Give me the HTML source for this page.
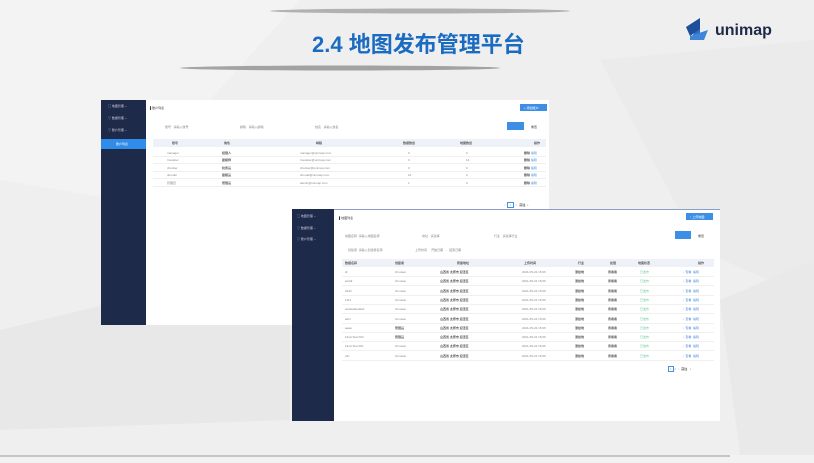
<!DOCTYPE html><html><head><meta charset="utf-8"><style>
*{margin:0;padding:0;box-sizing:border-box}
body{width:814px;height:463px;overflow:hidden;background:#efefef;font-family:"Liberation Sans","Noto Sans CJK SC",sans-serif;position:relative}
.a{position:absolute}
.t{font-size:3px;color:#888;white-space:nowrap}
.b{color:#555;font-weight:bold}
.bl{color:#4a8ee0}
</style></head><body>
<svg class="a" style="left:0;top:0" width="814" height="463">
<polygon points="0,0 300,0 120,200 0,180" fill="#f3f3f3"/>
<polygon points="600,60 814,40 814,300 700,250" fill="#ebebeb"/>
<polygon points="0,330 290,260 290,420 0,430" fill="#e8e8e8"/>
<polygon points="720,300 814,260 814,455 740,455" fill="#e9e9e9"/>
<rect x="0" y="455" width="814" height="8" fill="#f2f2f2"/>
<line x1="0" y1="456" x2="730" y2="456" stroke="#999" stroke-width="1"/>
<ellipse cx="420" cy="11" rx="150" ry="2.5" fill="#666" opacity=".45"/>
<ellipse cx="340" cy="68" rx="160" ry="2.5" fill="#555" opacity=".5"/>
<polygon points="700,22 693,35 700,40" fill="#2b6fc6"/>
<polygon points="686,27 700,18 700,29 690,36" fill="#1d4f9a"/>
<polygon points="690,36 708,30 704,40 690,40" fill="#3f86da"/>
</svg>
<div class="a" style="left:312px;top:27px;font-size:22px;font-weight:bold;color:#1b6cc0">2.4 地图发布管理平台</div>
<div class="a" style="left:715px;top:22px;font-size:16px;font-weight:bold;color:#1e2a48">unimap</div>

<div class="a" style="left:101px;top:100px;width:448px;height:225px;background:#fff"></div>
<div class="a" style="left:101px;top:100px;width:45px;height:225px;background:#1e2a4a"></div>
<div class="a t" style="left:108px;top:104px;color:#ccd">▢ 地图管理 ⌄</div>
<div class="a t" style="left:108px;top:116px;color:#ccd">▽ 数据管理 ⌄</div>
<div class="a t" style="left:108px;top:128px;color:#ccd">▽ 账户管理 ⌄</div>
<div class="a" style="left:101px;top:139px;width:45px;height:10px;background:#2f8ce8"></div>
<div class="a t" style="left:116px;top:142px;color:#fff">账户列表</div>
<div class="a t" style="left:150px;top:106px;color:#333">▌账户列表</div>
<div class="a" style="left:520px;top:104px;width:27px;height:7px;background:#3d8fe6"></div>
<div class="a t" style="left:524px;top:106px;color:#fff">+ 添加账户</div>
<div class="a t" style="left:165px;top:125px">账号 &nbsp;&nbsp;请输入账号</div>
<div class="a t" style="left:240px;top:125px">邮箱 &nbsp;&nbsp;请输入邮箱</div>
<div class="a t" style="left:315px;top:125px">姓名 &nbsp;&nbsp;请输入姓名</div>
<div class="a" style="left:507px;top:122px;width:17px;height:8px;background:#3d8fe6"></div>
<div class="a t" style="left:531px;top:125px;color:#333">重置</div>
<div class="a" style="left:153px;top:139px;width:393px;height:8px;background:#eef1f7"></div>
<div class="a t b" style="left:172px;top:141px">账号</div><div class="a t b" style="left:224px;top:141px">角色</div><div class="a t b" style="left:316px;top:141px">邮箱</div><div class="a t b" style="left:403px;top:141px">数据数量</div><div class="a t b" style="left:460px;top:141px">地图数量</div><div class="a t b" style="left:534px;top:141px">操作</div>
<div id="r1"></div>
<div class="a t" style="left:504px;top:203px;color:#aaa">&lt; <span style="border:1px solid #4a8ee0;padding:0 2px">1</span> &gt; &nbsp;&nbsp;<b style="color:#555">前往</b> &nbsp;1</div>

<div class="a" style="left:292px;top:209px;width:428px;height:212px;background:#fff;border-top:1px solid #8aa0c8"></div>
<div class="a" style="left:292px;top:209px;width:42px;height:212px;background:#1e2a4a"></div>
<div class="a t" style="left:297px;top:214px;color:#ccd">▢ 地图管理 ⌄</div>
<div class="a t" style="left:297px;top:226px;color:#ccd">▽ 数据管理 ⌄</div>
<div class="a t" style="left:297px;top:237px;color:#ccd">▽ 账户管理 ⌄</div>
<div class="a t" style="left:339px;top:216px;color:#333">▌地图列表</div>
<div class="a" style="left:686px;top:213px;width:27px;height:7px;background:#3d8fe6"></div>
<div class="a t" style="left:690px;top:215px;color:#fff">↑ 上传地图</div>
<div class="a t" style="left:345px;top:234px">地图名称 &nbsp;请输入地图名称</div>
<div class="a t" style="left:422px;top:234px">地址 &nbsp;&nbsp;请选择</div>
<div class="a t" style="left:494px;top:234px">行业 &nbsp;&nbsp;请选择行业</div>
<div class="a" style="left:675px;top:231px;width:16px;height:8px;background:#3d8fe6"></div>
<div class="a t" style="left:698px;top:234px;color:#333">重置</div>
<div class="a t" style="left:348px;top:248px">创建者 &nbsp;请输入创建者名称</div>
<div class="a t" style="left:415px;top:248px">上传时间 &nbsp;&nbsp;&nbsp;&nbsp;开始日期 &nbsp;&nbsp;- &nbsp;&nbsp;结束日期</div>
<div class="a" style="left:342px;top:259px;width:372px;height:8px;background:#eef1f7"></div>
<div id="r2"></div>
<div class="a t" style="left:668px;top:367px;color:#aaa"><span style="border:1px solid #4a8ee0;padding:0 1px">1</span> 2 &nbsp;&gt; &nbsp;<b style="color:#555">前往</b> &nbsp;&nbsp;1</div>
<script>
var h='';
var u=[['manager','经理人','manager@unimap.com',0,0],['Imodeler','建模师','Imodeler@unimap.com',0,14],['checker','检查员','checker@unimap.com',0,0],['dmodel','建模员','dmodel@unimap.com',14,0],['管理员','管理员','admin@unimap.com',1,0]];
u.forEach(function(r,i){var y=151+i*7.4;h+='<div class="a" style="left:153px;top:'+(y+5)+'px;width:393px;height:1px;background:#f0f0f0"></div>'+
'<div class="a t" style="left:167px;top:'+y+'px">'+r[0]+'</div><div class="a t b" style="left:222px;top:'+y+'px">'+r[1]+'</div><div class="a t" style="left:300px;top:'+y+'px">'+r[2]+'</div><div class="a t" style="left:408px;top:'+y+'px">'+r[3]+'</div><div class="a t" style="left:466px;top:'+y+'px">'+r[4]+'</div><div class="a t" style="left:524px;top:'+y+'px"><b style="color:#555">删除</b> <span class="bl">编辑</span></div>';});
document.getElementById('r1').outerHTML=h;
var hd=['数据名称','创建者','所属地址','上传时间','行业','处理','地图状态','操作'],hx=[345,395,457,524,578,610,638,698];
h='';hd.forEach(function(t,i){h+='<div class="a t b" style="left:'+hx[i]+'px;top:261px">'+t+'</div>';});
var n=['dl','asddr','2222','1111','asdasdasdasd','adcl','aaaa','Final Test 002','Final Test 001','cdc'];
n.forEach(function(t,i){var y=270+i*9.3;h+='<div class="a" style="left:342px;top:'+(y+6)+'px;width:372px;height:1px;background:#f0f0f0"></div>'+
'<div class="a t" style="left:345px;top:'+y+'px">'+t+'</div><div class="a t" style="left:395px;top:'+y+'px">'+(i==6||i==7?'<b style="color:#555">管理员</b>':'zhouwei')+'</div><div class="a t b" style="left:440px;top:'+y+'px">山西省 太原市 迎泽区</div><div class="a t" style="left:522px;top:'+y+'px">2021-05-22 15:06</div><div class="a t b" style="left:575px;top:'+y+'px">测绘地</div><div class="a t b" style="left:608px;top:'+y+'px">查看看</div><div class="a t" style="left:640px;top:'+y+'px;color:#6c9">已发布</div><div class="a t" style="left:683px;top:'+y+'px;color:#4a8ee0">↓ 查看 &nbsp;编辑</div>';});
document.getElementById('r2').outerHTML=h;
</script>
</body></html>
